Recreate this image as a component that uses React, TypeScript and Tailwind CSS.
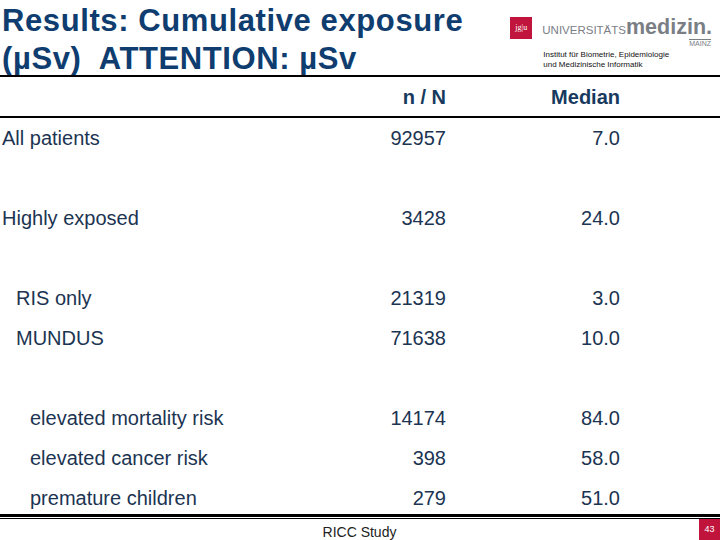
const rows = [
  { label: "All patients", indent: "pl-[2px]", n: "92957", median: "7.0" },
  { label: "", indent: "", n: "", median: "" },
  { label: "Highly exposed", indent: "pl-[2px]", n: "3428", median: "24.0" },
  { label: "", indent: "", n: "", median: "" },
  { label: "RIS only", indent: "pl-[16px]", n: "21319", median: "3.0" },
  { label: "MUNDUS", indent: "pl-[16px]", n: "71638", median: "10.0" },
  { label: "", indent: "", n: "", median: "" },
  { label: "elevated mortality risk", indent: "pl-[30px]", n: "14174", median: "84.0" },
  { label: "elevated cancer risk", indent: "pl-[30px]", n: "398", median: "58.0" },
  { label: "premature children", indent: "pl-[30px]", n: "279", median: "51.0" },
];

function Logo() {
  return (
    <div className="flex flex-col pt-[17px] pr-[8px]">
      <div className="flex items-center gap-[10px]">
        <div className="w-[22px] h-[22px] bg-[#c0143c] flex items-center justify-center">
          <span className="text-white text-[8px] leading-none font-['Liberation_Serif',serif]">jg|u</span>
        </div>
        <div className="flex items-baseline font-['Liberation_Sans',Arial,sans-serif] text-[#7a7e85]">
          <span className="text-[11.5px] font-light">UNIVERSITÄTS</span>
          <span className="text-[21.5px] font-bold leading-none">medizin.</span>
        </div>
      </div>
      <div className="flex justify-end pr-[1px]">
        <span className="text-[7px] leading-[8px] text-[#7a7e85] border-t border-[#7a7e85] font-['Liberation_Sans',Arial,sans-serif]">
          MAINZ
        </span>
      </div>
      <div className="pl-[33px] mt-[2px] text-[8px] leading-[10px] text-[#111] font-['Liberation_Sans',Arial,sans-serif]">
        <div>Institut für Biometrie, Epidemiologie</div>
        <div>und Medizinische Informatik</div>
      </div>
    </div>
  );
}

export default function App() {
  return (
    <div className="w-[720px] h-[540px] bg-white overflow-hidden flex flex-col font-['Liberation_Sans',Arial,sans-serif]">
      {/* Header */}
      <div className="h-[75px] flex justify-between">
        <h1 className="pl-[2px] pt-[2px] text-[31px] leading-[38px] tracking-[0.6px] font-bold text-[#0f3d6f] whitespace-pre">
          {"Results: Cumulative exposure\n(µSv)  ATTENTION: µSv"}
        </h1>
        <Logo />
      </div>
      <div className="h-[2px] bg-black" />

      {/* Column headings */}
      <div className="h-[39px] grid grid-cols-[300px_146px_174px] items-center text-[20px] font-bold text-[#173a5e]">
        <div />
        <div className="text-right">n / N</div>
        <div className="text-right">Median</div>
      </div>
      <div className="h-[2px] bg-black" />

      {/* Rows */}
      <div className="flex flex-col text-[20px] leading-[40px] text-[#1b3452]">
        {rows.map((row, i) => (
          <div
            key={i}
            className={
              i === rows.length - 1
                ? "h-[36px] grid grid-cols-[300px_146px_174px]"
                : "h-[40px] grid grid-cols-[300px_146px_174px]"
            }
          >
            <div className={row.indent}>{row.label}</div>
            <div className="text-right">{row.n}</div>
            <div className="text-right">{row.median}</div>
          </div>
        ))}
      </div>

      {/* Footer */}
      <div className="h-[3px] bg-black" />
      <div className="h-[1px]" />
      <div className="h-[1px] bg-black" />
      <div className="flex-1 flex">
        <div className="flex-1 text-center text-[14px] leading-[16px] pt-[5px] text-[#222] pl-[20px]">RICC Study</div>
        <div className="w-[21px] bg-[#c0143c] flex items-center justify-center text-white text-[9px]">
          43
        </div>
      </div>
    </div>
  );
}
